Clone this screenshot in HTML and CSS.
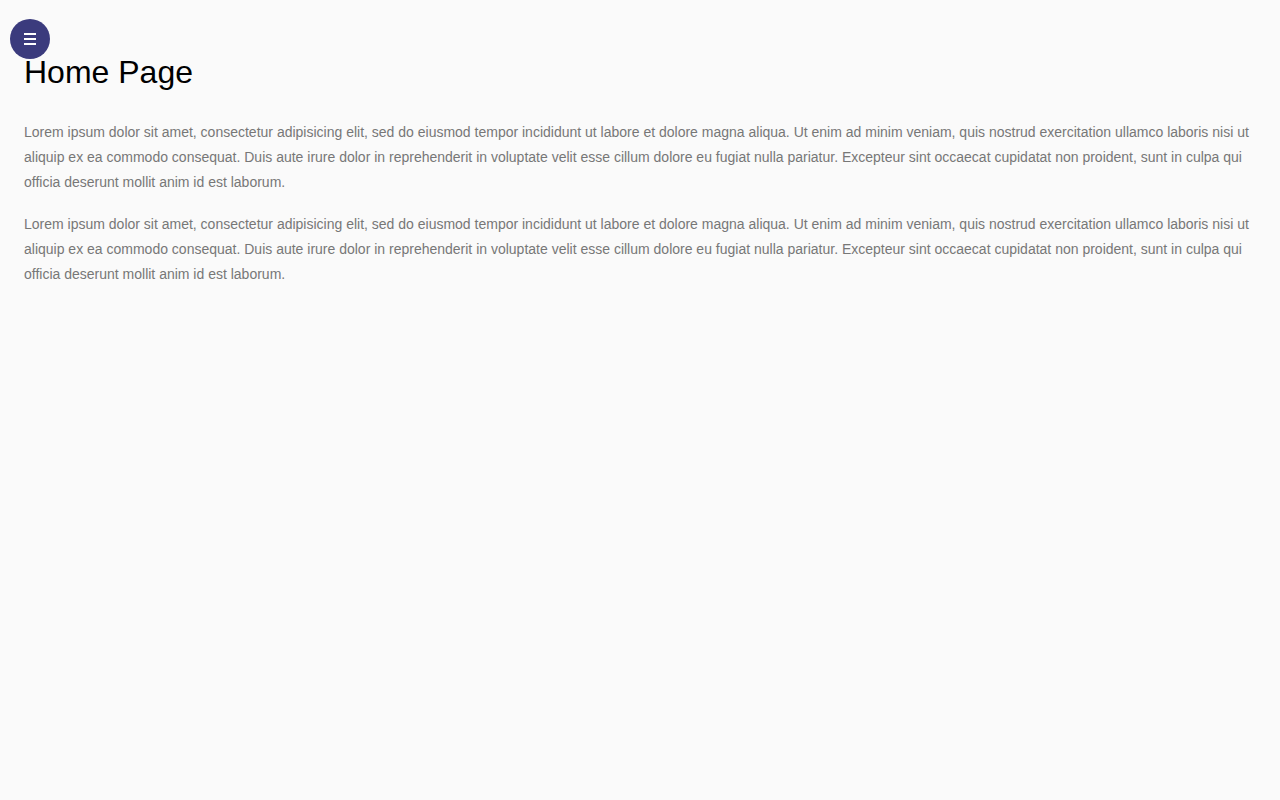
FILE: index.html
```html
<!DOCTYPE html>
<html lang="en">
<head>
<meta charset="utf-8">
<title>Home Page</title>
<link rel="stylesheet" href="styles.css">
</head>
<body>
<button class="menu-btn" aria-label="Menu">
  <svg width="12" height="12" viewBox="0 0 12 12"><rect x="0" y="0" width="12" height="2" fill="#fff"/><rect x="0" y="5" width="12" height="2" fill="#fff"/><rect x="0" y="10" width="12" height="2" fill="#fff"/></svg>
</button>
<main class="content">
  <h1 class="title">Home Page</h1>
  <p class="text">Lorem ipsum dolor sit amet, consectetur adipisicing elit, sed do eiusmod tempor incididunt ut labore et dolore magna aliqua. Ut enim ad minim veniam, quis nostrud exercitation ullamco laboris nisi ut aliquip ex ea commodo consequat. Duis aute irure dolor in reprehenderit in voluptate velit esse cillum dolore eu fugiat nulla pariatur. Excepteur sint occaecat cupidatat non proident, sunt in culpa qui officia deserunt mollit anim id est laborum.</p>
  <p class="text">Lorem ipsum dolor sit amet, consectetur adipisicing elit, sed do eiusmod tempor incididunt ut labore et dolore magna aliqua. Ut enim ad minim veniam, quis nostrud exercitation ullamco laboris nisi ut aliquip ex ea commodo consequat. Duis aute irure dolor in reprehenderit in voluptate velit esse cillum dolore eu fugiat nulla pariatur. Excepteur sint occaecat cupidatat non proident, sunt in culpa qui officia deserunt mollit anim id est laborum.</p>
</main>
</body>
</html>
```
FILE: styles.css
```css
html, body {
  margin: 0;
  padding: 0;
  background: #fafafa;
  font-family: "Liberation Sans", Arial, sans-serif;
}
.menu-btn {
  position: fixed;
  top: 19px;
  left: 10px;
  width: 40px;
  height: 40px;
  border-radius: 50%;
  border: none;
  padding: 0;
  background: #3b3b7d;
  display: flex;
  align-items: center;
  justify-content: center;
  cursor: pointer;
}
.menu-btn svg {
  display: block;
}
.content {
  padding: 0 24px;
  display: flow-root;
}
.title {
  margin: 54px 0 29px;
  font-size: 32px;
  font-weight: normal;
  line-height: 36.8px;
  color: #000;
}
.text {
  margin: 0 0 17px;
  font-size: 14px;
  line-height: 25px;
  color: #777;
}
```
